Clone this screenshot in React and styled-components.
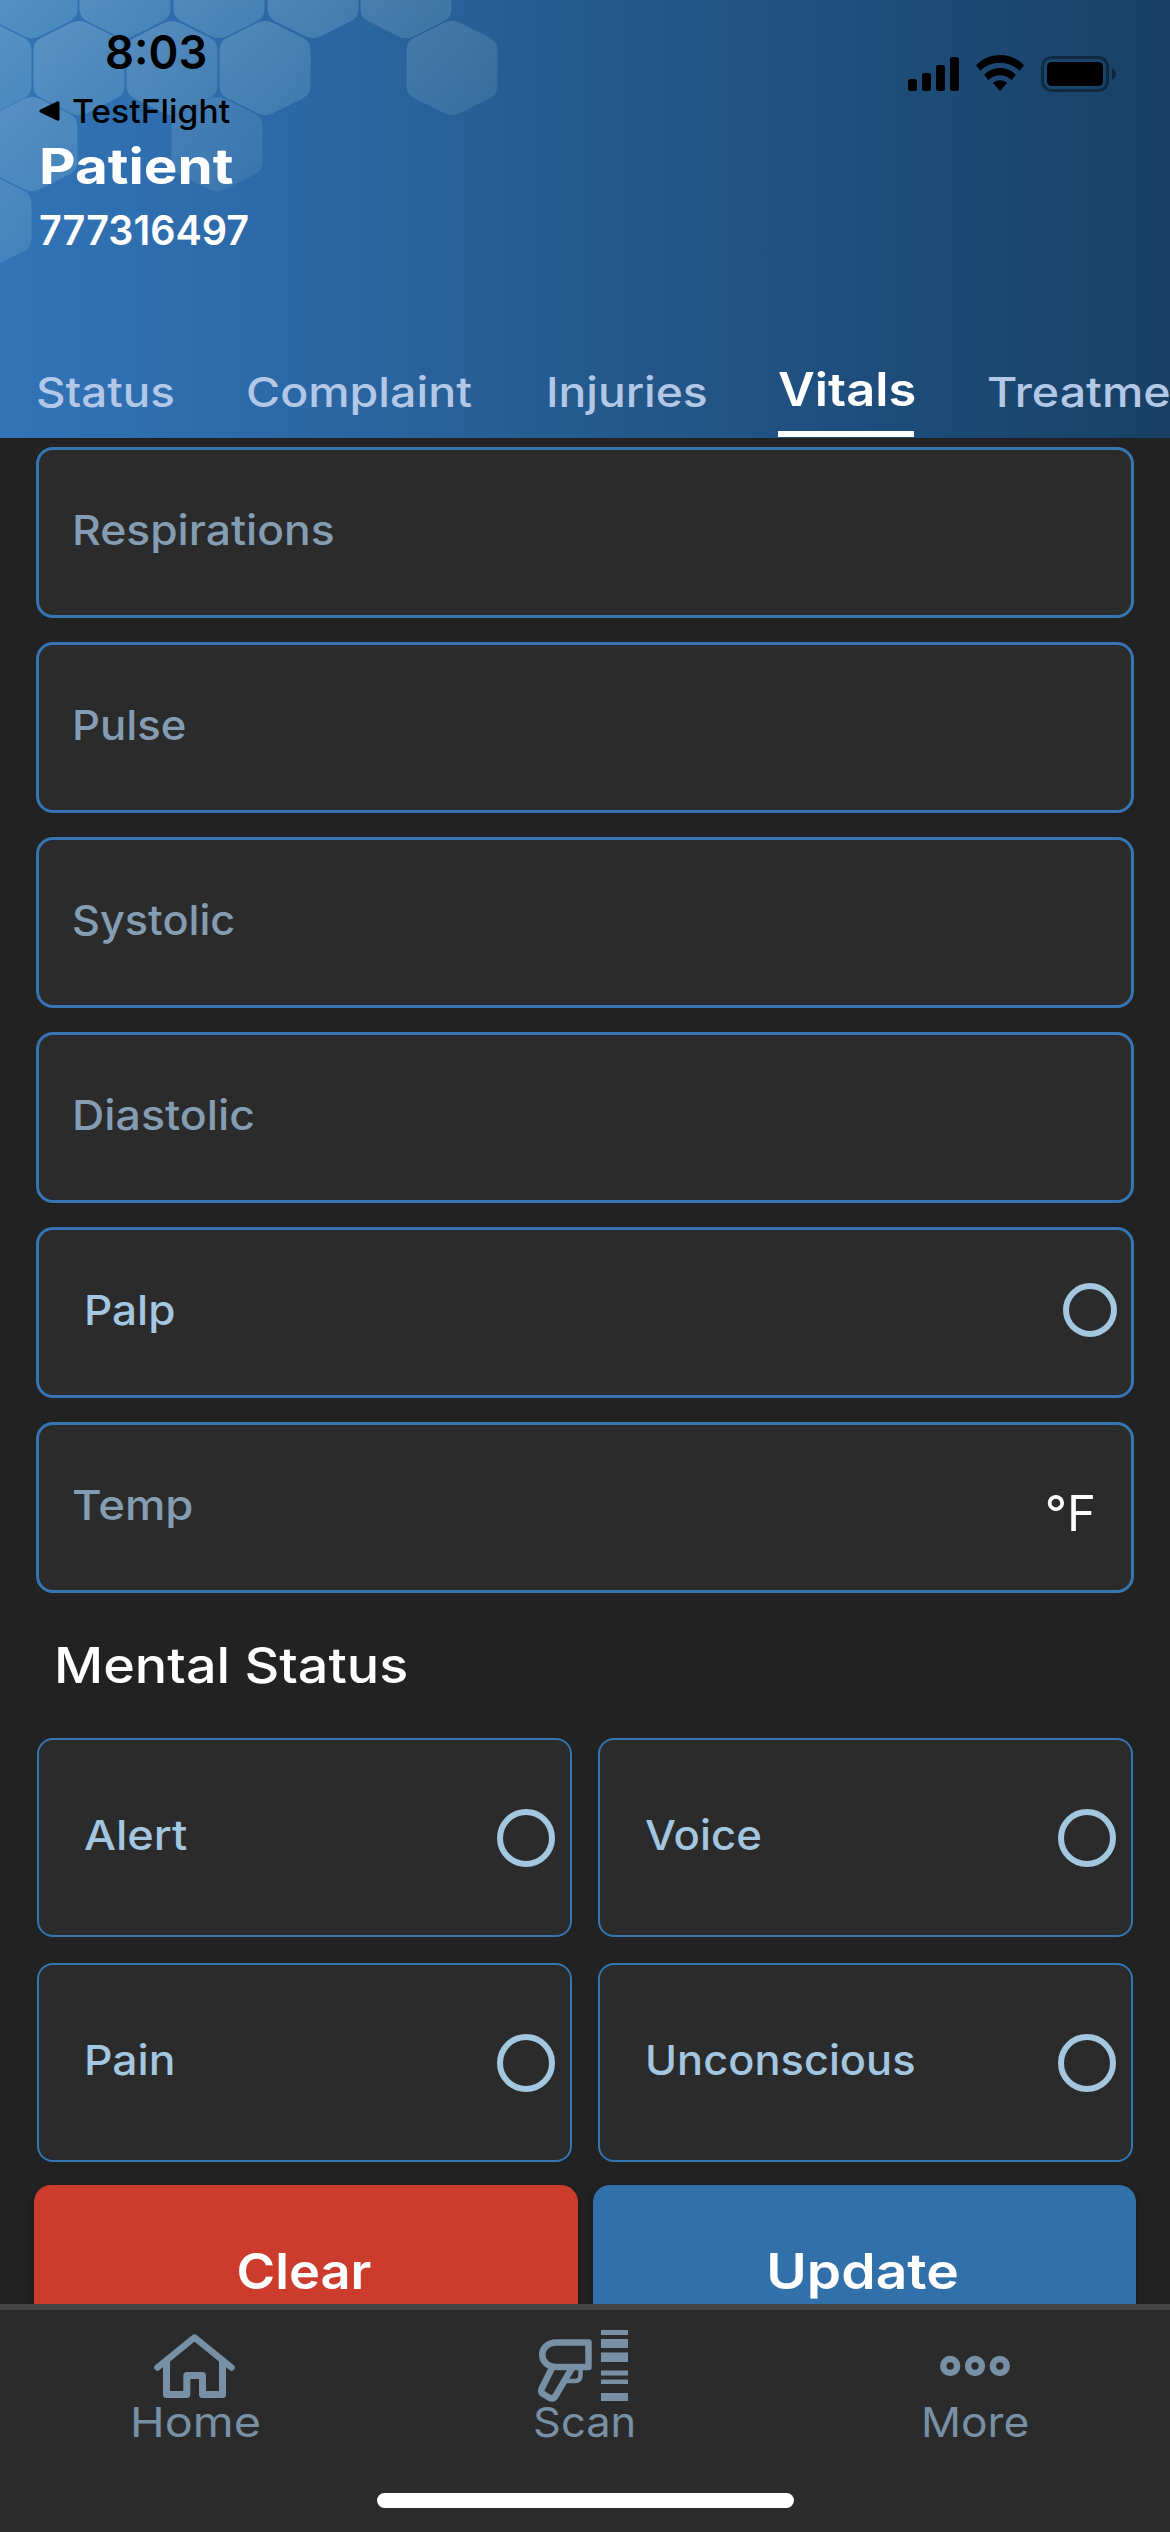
import React from "react";
import styled, { createGlobalStyle } from "styled-components";

const Global = createGlobalStyle`
  * { box-sizing: border-box; }
  html, body { margin: 0; padding: 0; background: #222222; overflow: hidden; }
  body { font-family: Inter, "Liberation Sans", sans-serif; }
`;

const Screen = styled.div`
  width: 1170px;
  height: 2532px;
  display: flex;
  flex-direction: column;
  overflow: hidden;
  background: #222222;
`;

const Label = styled.span`
  display: block;
  width: max-content;
  font-size: ${(p) => p.$size || 41}px;
  font-weight: ${(p) => p.$weight || 500};
  color: ${(p) => p.$color || "#ffffff"};
  line-height: ${(p) => p.$line || 50}px;
  white-space: nowrap;
  transform: scaleX(${(p) => p.$stretch || 1});
  transform-origin: ${(p) => (p.$centered ? "center" : "left")};
`;

/* ---------- header ---------- */

const Header = styled.header`
  position: relative;
  height: 438px;
  flex: none;
  display: flex;
  flex-direction: column;
  overflow: hidden;
  background: linear-gradient(90deg, #3274b7 0%, #2c68a6 25%, #255a8c 50%, #1e4d7b 75%, #194064 100%);
`;

const HexPattern = styled.svg`
  position: absolute;
  top: 0;
  left: 0;
`;

const StatusBar = styled.div`
  position: relative;
  display: flex;
  justify-content: space-between;
  height: 142px;
  padding: 29px 54px 0 38px;
`;

const ClockColumn = styled.div`
  display: flex;
  flex-direction: column;
  gap: 20px;
`;

const Clock = styled.div`
  display: flex;
  padding-left: 67px;
`;

const BackLink = styled.div`
  display: flex;
  align-items: center;
  gap: 12px;
`;

const StatusIcons = styled.div`
  display: flex;
  align-items: flex-start;
  gap: 17px;
  padding-top: 26px;
`;

const PatientInfo = styled.div`
  position: relative;
  display: flex;
  flex-direction: column;
  gap: 17px;
  padding-left: 39px;
`;

const Tabs = styled.nav`
  position: relative;
  display: flex;
  align-items: stretch;
  gap: 73px;
  height: 70px;
  margin-top: auto;
  padding-left: 36px;
`;

const Tab = styled.div`
  flex: none;
  width: ${(p) => p.$width}px;
  height: 69px;
  border-bottom: ${(p) => (p.$active ? "6px solid #ffffff" : "0")};
`;

/* ---------- form ---------- */

const Form = styled.main`
  flex: 1;
  min-height: 0;
  overflow: hidden;
  display: flex;
  flex-direction: column;
  padding: 9px 36px 0;
`;

const Fields = styled.div`
  flex: none;
  display: flex;
  flex-direction: column;
  gap: 24px;
`;

const Field = styled.div`
  height: 171px;
  display: flex;
  align-items: center;
  justify-content: space-between;
  padding: 0 ${(p) => p.$right || 0}px 5px ${(p) => p.$left || 33}px;
  border: 3px solid #3475b3;
  border-radius: 17px;
  background: #2b2b2b;
`;

const Unit = styled.div`
  padding-top: 17px;
`;

const Radio = styled.span`
  flex: none;
  width: ${(p) => p.$size}px;
  height: ${(p) => p.$size}px;
  border: 6px solid #a3c7e0;
  border-radius: 50%;
`;

const SectionTitle = styled.div`
  flex: none;
  height: 145px;
  padding: 48px 0 0 18px;
`;

const Grid = styled.div`
  flex: none;
  display: grid;
  grid-template-columns: 535px 535px;
  column-gap: 26px;
  row-gap: 26px;
  padding-left: 1px;
`;

const Card = styled.div`
  height: 199px;
  display: flex;
  align-items: center;
  justify-content: space-between;
  padding: 0 15px 0 45px;
  border: 2px solid #3475b3;
  border-radius: 16px;
  background: #2b2b2b;
`;

const CardLabel = styled.div`
  padding-bottom: 5px;
`;

const Actions = styled.div`
  display: flex;
  flex: none;
  gap: 15px;
  margin: 23px -2px 0;
`;

const Action = styled.div`
  flex: 1;
  height: 177px;
  display: flex;
  justify-content: center;
  padding: 62px 3px 0 0;
  border-radius: 17px;
  background: ${(p) => p.$tone};
  box-shadow: 0 2px 6px rgba(0, 0, 0, 0.35);
`;

/* ---------- bottom bar ---------- */

const BottomBar = styled.footer`
  flex: none;
  height: 228px;
  display: flex;
  flex-direction: column;
  align-items: center;
  border-top: 6px solid #444444;
  background: #2b2b2b;
`;

const NavRow = styled.div`
  width: 100%;
  height: 183px;
  display: grid;
  grid-template-columns: repeat(3, 1fr);
`;

const NavItem = styled.div`
  display: flex;
  flex-direction: column;
  align-items: center;
  padding-top: 16px;

  svg { flex: none; }
`;

const HomeIndicator = styled.div`
  width: 417px;
  height: 15px;
  border-radius: 8px;
  background: #ffffff;
`;

/* ---------- drawings ---------- */

const HEXES = [
  [-61, -9, 0.29], [32, -9, 0.28], [125, -9, 0.27], [219, -9, 0.26], [313, -9, 0.25], [406, -9, 0.22],
  [-14, 68, 0.27], [79, 68, 0.26], [172, 68, 0.24], [265, 68, 0.22], [452, 68, 0.17],
  [32, 144, 0.24], [217, 144, 0.15],
  [-14, 221, 0.2],
];

function hexPath(cx, cy) {
  const w = 45.5;
  const h = 49;
  const pts = [[0, -h], [w, -h / 2 - 2], [w, h / 2 + 2], [0, h], [-w, h / 2 + 2], [-w, -h / 2 - 2]];
  const t = 0.17;
  let d = "";
  pts.forEach((p, i) => {
    const a = pts[(i + 5) % 6];
    const b = pts[(i + 1) % 6];
    const s = [p[0] + (a[0] - p[0]) * t, p[1] + (a[1] - p[1]) * t];
    const e = [p[0] + (b[0] - p[0]) * t, p[1] + (b[1] - p[1]) * t];
    d += `${i ? "L" : "M"}${cx + s[0]} ${cy + s[1]}Q${cx + p[0]} ${cy + p[1]} ${cx + e[0]} ${cy + e[1]}`;
  });
  return d + "Z";
}

const Hexagons = () => (
  <HexPattern width="520" height="290" viewBox="0 0 520 290">
    <defs>
      <linearGradient id="hex" x1="0.1" y1="0" x2="0.8" y2="1">
        <stop offset="0" stopColor="#d8ecee" />
        <stop offset="1" stopColor="#a8dce0" stopOpacity="0.75" />
      </linearGradient>
    </defs>
    {HEXES.map(([x, y, o]) => (
      <path key={`${x},${y}`} d={hexPath(x, y)} fill="url(#hex)" opacity={o} />
    ))}
  </HexPattern>
);

const Signal = () => (
  <svg width="51" height="36" viewBox="0 0 51 36">
    <rect x="0" y="24" width="9" height="12" rx="2.5" />
    <rect x="14" y="18" width="9" height="18" rx="2.5" />
    <rect x="28" y="10" width="9" height="26" rx="2.5" />
    <rect x="42" y="2" width="9" height="34" rx="2.5" />
  </svg>
);

const Wifi = () => (
  <svg width="48" height="36" viewBox="0 0 48 36">
    <path d="M24 0C33 0 41.700 3.500 48 10.300L43.700 15.800C38.200 10.400 31.500 7.700 24 7.700S9.800 10.400 4.300 15.800L0 10.300C6.300 3.500 15 0 24 0Z" />
    <path d="M24 13C30 13 35.600 15.400 40 19.700L35.600 25C32.300 21.900 28.300 20.300 24 20.300S15.700 21.900 12.400 25L8 19.700C12.400 15.400 18 13 24 13Z" />
    <path d="M24 25.200C26.700 25.200 29.200 26.200 31.100 28L24 36L16.900 28C18.800 26.200 21.300 25.200 24 25.200Z" />
  </svg>
);

const Battery = () => (
  <svg width="75" height="37" viewBox="0 0 75 37">
    <rect x="1.500" y="2.500" width="65" height="33" rx="9" fill="none" stroke="#000" strokeWidth="3" opacity="0.400" />
    <rect x="6" y="7" width="56" height="24" rx="4.500" />
    <path d="M71 13.500C76 15.500 76 22.500 71 24.500Z" opacity="0.450" />
  </svg>
);

const ICON = "#7890a5";

const HomeIcon = () => (
  <svg width="82" height="74" viewBox="154 2326 82 74" fill="none" stroke={ICON} strokeLinejoin="round" strokeLinecap="round">
    <path d="M157.500 2367.500L194.500 2337.500L231.500 2367.500" strokeWidth="6.500" />
    <path d="M166.500 2361V2394.500H186.800V2375.500H202.500V2394.500H222.500V2361" strokeWidth="7" />
  </svg>
);

const ScanIcon = () => (
  <svg width="96" height="74" viewBox="536 2326 96 74" overflow="visible" fill="none" stroke={ICON} strokeWidth="6.500" strokeLinejoin="round">
    <path d="M587.500 2342.500H555.500C536.500 2342.500 536.500 2367 555.500 2367H587.500Z" />
    <path d="M551 2368L540.500 2389C539.500 2392 541 2393.500 543 2394.500L548 2397.500C551 2399 553 2398.500 554.500 2396L571 2368" />
    <path d="M579.500 2369V2375C579.500 2379 577.500 2381 574 2381H566" strokeWidth="4.500" />
    <g fill={ICON} stroke="none">
      <rect x="600" y="2330" width="27" height="5" />
      <rect x="600" y="2339" width="27" height="9" />
      <rect x="600" y="2352.500" width="27" height="9.500" />
      <rect x="600" y="2370.500" width="27" height="5" />
      <rect x="600" y="2379.500" width="27" height="4.500" />
      <rect x="600" y="2393" width="27" height="8" />
    </g>
  </svg>
);

const MoreIcon = () => (
  <svg width="72" height="74" viewBox="939 2326 72 74" fill="none" stroke={ICON} strokeWidth="6.500">
    <circle cx="950.200" cy="2366" r="6.900" />
    <circle cx="975" cy="2366" r="6.900" />
    <circle cx="999.800" cy="2366" r="6.900" />
  </svg>
);

/* ---------- data ---------- */

const TABS = [
  { name: "Status", width: 137, stretch: 1.115 },
  { name: "Complaint", width: 227, stretch: 1.135 },
  { name: "Injuries", width: 159, stretch: 1.125 },
  { name: "Vitals", width: 136, stretch: 1.1, active: true },
  { name: "Treatments", width: 182, stretch: 1.135 },
];

const MUTED = "#849db2";
const LIGHT = "#a3c7e0";

const FIELDS = [
  { name: "Respirations", stretch: 1.083 },
  { name: "Pulse", stretch: 1.065 },
  { name: "Systolic", stretch: 1.055 },
  { name: "Diastolic", stretch: 1.09 },
];

const STATES = [
  { name: "Alert", stretch: 1.1 },
  { name: "Voice", stretch: 1.065 },
  { name: "Pain", stretch: 1.085 },
  { name: "Unconscious", stretch: 1.058 },
];

const NAV = [
  { name: "Home", stretch: 1.14, Icon: HomeIcon },
  { name: "Scan", stretch: 1.06, Icon: ScanIcon },
  { name: "More", stretch: 1.08, Icon: MoreIcon },
];

export default function App() {
  return (
    <Screen>
      <Global />
      <Header>
        <Hexagons />
        <StatusBar>
          <ClockColumn>
            <Clock>
              <Label $size={47} $weight={600} $line={46} $stretch={0.965} $color="#000">8:03</Label>
            </Clock>
            <BackLink>
              <svg width="22" height="22" viewBox="0 0 22 22">
                <path d="M19 1.500L2.500 9.500Q0 11 2.500 12.500L19 20.500Q21.500 21.500 21.500 19V3Q21.500 0.500 19 1.500Z" />
              </svg>
              <Label $size={33} $weight={500} $line={32} $stretch={1.02} $color="#000">TestFlight</Label>
            </BackLink>
          </ClockColumn>
          <StatusIcons>
            <Signal />
            <Wifi />
            <Battery />
          </StatusIcons>
        </StatusBar>
        <PatientInfo>
          <Label $size={49} $weight={700} $stretch={1.155}>Patient</Label>
          <Label $size={41} $weight={600} $line={42} $stretch={0.965}>777316497</Label>
        </PatientInfo>
        <Tabs>
          {TABS.map((t) => (
            <Tab key={t.name} $width={t.width} $active={t.active}>
              <Label
                $size={t.active ? 46 : 41}
                $weight={t.active ? 600 : 500}
                $line={t.active ? 43 : 49}
                $stretch={t.stretch}
                $color={t.active ? "#ffffff" : "#b3c8e6"}
              >
                {t.name}
              </Label>
            </Tab>
          ))}
        </Tabs>
      </Header>

      <Form>
        <Fields>
          {FIELDS.map((f) => (
            <Field key={f.name}>
              <Label $stretch={f.stretch} $color={MUTED}>{f.name}</Label>
            </Field>
          ))}
          <Field $left={45} $right={14}>
            <Label $stretch={1.075} $color={LIGHT}>Palp</Label>
            <Radio $size={54} />
          </Field>
          <Field $right={35}>
            <Label $stretch={1.11} $color={MUTED}>Temp</Label>
            <Unit>
              <Label $size={49} $weight={400}>°F</Label>
            </Unit>
          </Field>
        </Fields>

        <SectionTitle>
          <Label $size={49} $stretch={1.1}>Mental Status</Label>
        </SectionTitle>

        <Grid>
          {STATES.map((s) => (
            <Card key={s.name}>
              <CardLabel>
                <Label $stretch={s.stretch} $color={LIGHT}>{s.name}</Label>
              </CardLabel>
              <Radio $size={58} />
            </Card>
          ))}
        </Grid>

        <Actions>
          <Action $tone="#cb3c2d">
            <Label $size={49} $weight={600} $stretch={1.07} $centered>Clear</Label>
          </Action>
          <Action $tone="#3270aa">
            <Label $size={49} $weight={600} $stretch={1.125} $centered>Update</Label>
          </Action>
        </Actions>
      </Form>

      <BottomBar>
        <NavRow>
          {NAV.map(({ name, stretch, Icon }) => (
            <NavItem key={name}>
              <Icon />
              <Label $weight={400} $line={44} $stretch={stretch} $centered $color={ICON}>{name}</Label>
            </NavItem>
          ))}
        </NavRow>
        <HomeIndicator />
      </BottomBar>
    </Screen>
  );
}
